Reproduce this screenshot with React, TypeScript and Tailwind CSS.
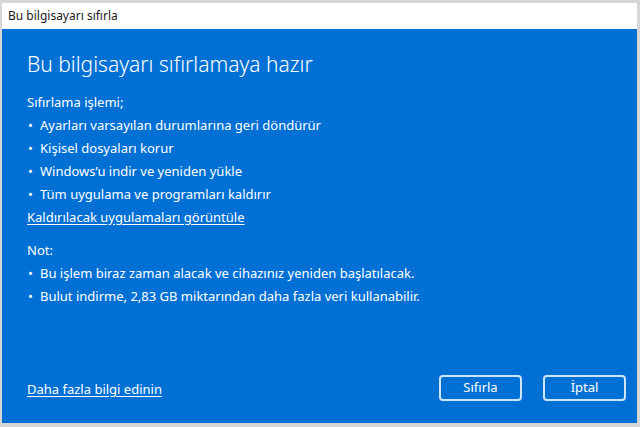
const font = { fontFamily: '"Noto Sans", "Open Sans", sans-serif' };

const steps = [
  "Ayarları varsayılan durumlarına geri döndürür",
  "Kişisel dosyaları korur",
  "Windows’u indir ve yeniden yükle",
  "Tüm uygulama ve programları kaldırır",
];

const notes = [
  "Bu işlem biraz zaman alacak ve cihazınız yeniden başlatılacak.",
  "Bulut indirme, 2,83 GB miktarından daha fazla veri kullanabilir.",
];

const Bullet = ({ text }: { text: string }) => (
  <li className="flex items-center h-[23px]">
    <span className="w-[13px] pl-[1px] text-[13px]">•</span>
    <span>{text}</span>
  </li>
);

export default function App() {
  return (
    <div className="w-[640px] h-[427px] bg-[#d6d6d6] pt-[3px] pl-[2px] overflow-hidden" style={font}>
      <div className="w-[635px] h-[420px] flex flex-col">
        <div className="h-[26px] bg-white flex items-center pl-[6px] text-[12px] text-[#1a1a1a]">
          Bu bilgisayarı sıfırla
        </div>
        <div className="flex-1 bg-[#0070d4] text-white flex flex-col pl-[25px] pr-[11px] pt-[21px] pb-[22px]">
          <h1 className="text-[21px] font-light leading-[28px]">Bu bilgisayarı sıfırlamaya hazır</h1>

          <div className="mt-[13px] text-[13px]">
            <p className="h-[23px] flex items-center">Sıfırlama işlemi;</p>
            <ul>
              {steps.map((s) => (
                <Bullet key={s} text={s} />
              ))}
            </ul>
            <a href="#" className="h-[23px] flex items-center underline underline-offset-2">
              Kaldırılacak uygulamaları görüntüle
            </a>
          </div>

          <div className="mt-[10px] text-[13px]">
            <p className="h-[23px] flex items-center">Not:</p>
            <ul>
              {notes.map((s) => (
                <Bullet key={s} text={s} />
              ))}
            </ul>
          </div>

          <div className="mt-auto flex items-center justify-between">
            <a href="#" className="text-[13px] underline underline-offset-2 mt-[4px]">
              Daha fazla bilgi edinin
            </a>
            <div className="flex gap-[21px]">
              <button className="w-[83px] h-[26px] rounded-[4px] border-2 border-[#cfe4f7] text-[13px]">
                Sıfırla
              </button>
              <button className="w-[83px] h-[26px] rounded-[4px] border-2 border-[#cfe4f7] text-[13px]">
                İptal
              </button>
            </div>
          </div>
        </div>
      </div>
    </div>
  );
}
